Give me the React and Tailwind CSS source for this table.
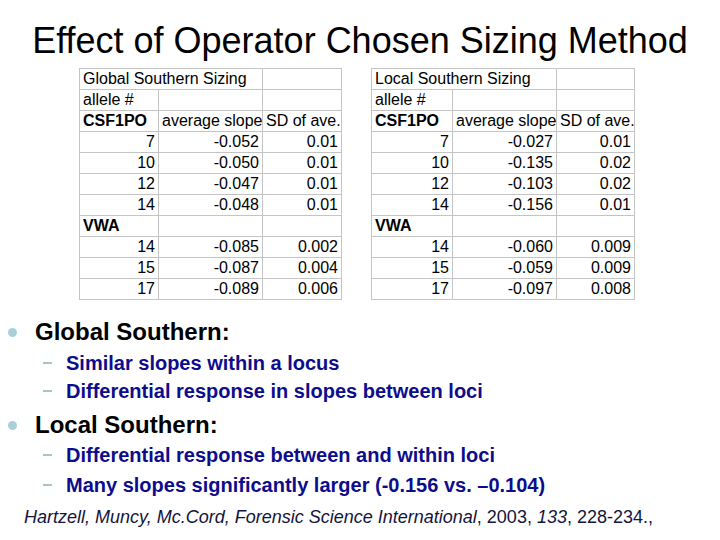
const globalRows = [
  ["7", "-0.052", "0.01"],
  ["10", "-0.050", "0.01"],
  ["12", "-0.047", "0.01"],
  ["14", "-0.048", "0.01"],
];
const globalVwa = [
  ["14", "-0.085", "0.002"],
  ["15", "-0.087", "0.004"],
  ["17", "-0.089", "0.006"],
];
const localRows = [
  ["7", "-0.027", "0.01"],
  ["10", "-0.135", "0.02"],
  ["12", "-0.103", "0.02"],
  ["14", "-0.156", "0.01"],
];
const localVwa = [
  ["14", "-0.060", "0.009"],
  ["15", "-0.059", "0.009"],
  ["17", "-0.097", "0.008"],
];

const cell = "h-[21px] border-r border-b border-[#c4c4c4] px-[3px] leading-[20px] whitespace-nowrap overflow-hidden";

const DataRows = ({ rows }) =>
  rows.map((r) => (
    <div key={r[0]} className="contents">
      <div className={`${cell} text-right`}>{r[0]}</div>
      <div className={`${cell} text-right`}>{r[1]}</div>
      <div className={`${cell} text-right`}>{r[2]}</div>
    </div>
  ));

const SlopeTable = ({ title, cols, rows, vwa }) => (
  <div className={`grid ${cols} border-l border-t border-[#c4c4c4] text-[16px] text-black`}>
    <div className={`${cell} col-span-2`}>{title}</div>
    <div className={cell}></div>
    <div className={cell}>allele #</div>
    <div className={cell}></div>
    <div className={cell}></div>
    <div className={`${cell} font-bold`}>CSF1PO</div>
    <div className={cell}>average slope</div>
    <div className={cell}>SD of ave.</div>
    <DataRows rows={rows} />
    <div className={`${cell} font-bold`}>VWA</div>
    <div className={cell}></div>
    <div className={cell}></div>
    <DataRows rows={vwa} />
  </div>
);

const MainBullet = ({ children, className = "" }) => (
  <div className={`flex items-center h-[30px] ${className}`}>
    <span className="ml-[8px] w-[9px] h-[9px] rounded-full bg-[#a9d0da]"></span>
    <span className="ml-[18px] text-[24px] font-bold text-black leading-[30px]">{children}</span>
  </div>
);

const SubBullet = ({ children, className = "" }) => (
  <div className={`flex items-center ${className}`}>
    <span className="ml-[43px] w-[9px] h-[2px] bg-[#a9c4cc]"></span>
    <span className="ml-[14px] text-[20px] font-bold text-[#0d0d8c]">{children}</span>
  </div>
);

export default function App() {
  return (
    <div
      className="w-[720px] h-[540px] bg-white overflow-hidden"
      style={{ fontFamily: '"Liberation Sans", Arial, sans-serif' }}
    >
      <h1 className="pt-[21px] h-[58px] text-[36px] leading-[40px] text-black text-center">
        Effect of Operator Chosen Sizing Method
      </h1>

      <div className="mt-[10px] pl-[79px] flex gap-[29px]">
        <SlopeTable
          title="Global Southern Sizing"
          cols="grid-cols-[79px_104px_79px]"
          rows={globalRows}
          vwa={globalVwa}
        />
        <SlopeTable
          title="Local Southern Sizing"
          cols="grid-cols-[81px_104px_78px]"
          rows={localRows}
          vwa={localVwa}
        />
      </div>

      <div className="mt-[17px]">
        <MainBullet>Global Southern:</MainBullet>
        <SubBullet className="mt-[2px] h-[28px]">Similar slopes within a locus</SubBullet>
        <SubBullet className="h-[28px]">Differential response in slopes between loci</SubBullet>
        <MainBullet className="mt-[5px]">Local Southern:</MainBullet>
        <SubBullet className="h-[30px]">Differential response between and within loci</SubBullet>
        <SubBullet className="h-[30px]">Many slopes significantly larger (-0.156 vs. –0.104)</SubBullet>
        <p className="mt-[4px] h-[26px] pl-[24px] text-[18px] leading-[26px] text-[#14143c] whitespace-nowrap">
          <i>Hartzell, Muncy, Mc.Cord, Forensic Science International</i>, 2003, <i>133</i>, 228-234.,
        </p>
      </div>
    </div>
  );
}
